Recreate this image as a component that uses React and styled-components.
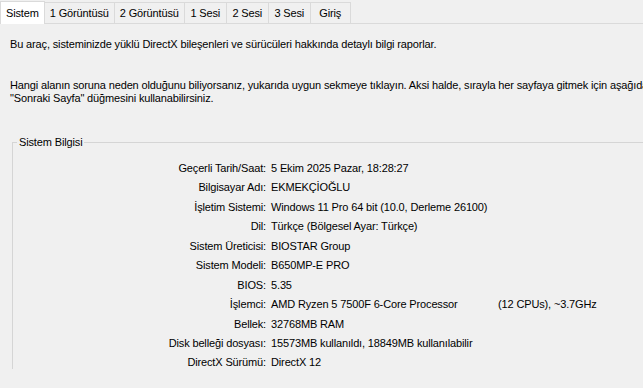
import React from "react";
import styled, { createGlobalStyle } from "styled-components";

const Global = createGlobalStyle`
  html, body { margin: 0; padding: 0; background: #f0f0f0; }
  body { font-family: "Liberation Sans", Arial, sans-serif; font-size: 11px; letter-spacing: -0.14px; color: #000; overflow: hidden; }
`;

const Window = styled.div`
  width: 643px;
  height: 388px;
  background: #f0f0f0;
  display: flex;
  flex-direction: column;
  overflow: hidden;
`;

const TabStrip = styled.div`
  display: flex;
  align-items: flex-end;
  height: 24px;
  background: #f0f0f0;
  border-bottom: 1px solid #dadada;
  box-sizing: border-box;
`;

const Tab = styled.div`
  height: ${(p) => (p.$active ? "23px" : "21px")};
  min-width: ${(p) => p.$min || 42}px;
  box-sizing: border-box;
  padding: 0 5px;
  display: flex;
  align-items: center;
  justify-content: center;
  background: ${(p) => (p.$active ? "#ffffff" : "#f0f0f0")};
  border: 1px solid #dadada;
  border-bottom: none;
  margin-left: -1px;
  margin-bottom: ${(p) => (p.$active ? "-1px" : "0")};
  white-space: nowrap;
  position: relative;
  z-index: ${(p) => (p.$active ? 1 : 0)};
  &:first-child { margin-left: 0; }
`;

const Page = styled.div`
  flex: 1;
  padding: 14px 0 0 10px;
  display: flex;
  flex-direction: column;
  white-space: nowrap;
`;

const Para = styled.p`
  margin: 0;
  line-height: 13px;
  margin-bottom: ${(p) => p.$mb || "0"};
`;

const Group = styled.fieldset`
  margin: 0 0 0 2px;
  padding: 13px 0 0 0;
  border: 1px solid #d5d5d5;
  border-right: none;
  border-bottom: none;
  min-width: 0;
`;

const Legend = styled.legend`
  padding: 0 2px;
  margin-left: 4px;
  line-height: 13px;
`;

const Rows = styled.div`
  display: grid;
  grid-template-columns: 253px 1fr;
  column-gap: 5px;
  row-gap: 6.45px;
`;

const Label = styled.div`
  text-align: right;
  line-height: 13px;
`;

const Value = styled.div`
  line-height: 13px;
  display: flex;
`;

const Cpu = styled.span`
  width: 227px;
`;

const tabs = [
  ["Sistem", 42],
  ["1 Görüntüsü", 69],
  ["2 Görüntüsü", 71],
  ["1 Sesi", 43],
  ["2 Sesi", 43],
  ["3 Sesi", 43],
  ["Giriş", 41],
];

const rows = [
  ["Geçerli Tarih/Saat:", "5 Ekim 2025 Pazar, 18:28:27"],
  ["Bilgisayar Adı:", "EKMEKÇİOĞLU"],
  ["İşletim Sistemi:", "Windows 11 Pro 64 bit (10.0, Derleme 26100)"],
  ["Dil:", "Türkçe (Bölgesel Ayar: Türkçe)"],
  ["Sistem Üreticisi:", "BIOSTAR Group"],
  ["Sistem Modeli:", "B650MP-E PRO"],
  ["BIOS:", "5.35"],
  ["İşlemci:", null],
  ["Bellek:", "32768MB RAM"],
  ["Disk belleği dosyası:", "15573MB kullanıldı, 18849MB kullanılabilir"],
  ["DirectX Sürümü:", "DirectX 12"],
];

export default function App() {
  return (
    <Window>
      <Global />
      <TabStrip>
        {tabs.map(([t, w], i) => (
          <Tab key={t} $active={i === 0} $min={w}>{t}</Tab>
        ))}
      </TabStrip>
      <Page>
        <Para $mb="28px">Bu araç, sisteminizde yüklü DirectX bileşenleri ve sürücüleri hakkında detaylı bilgi raporlar.</Para>
        <Para>Hangi alanın soruna neden olduğunu biliyorsanız, yukarıda uygun sekmeye tıklayın. Aksi halde, sırayla her sayfaya gitmek için aşağıdaki</Para>
        <Para $mb="31px">"Sonraki Sayfa" düğmesini kullanabilirsiniz.</Para>
        <Group>
          <Legend>Sistem Bilgisi</Legend>
          <Rows>
            {rows.map(([l, v]) => (
              <React.Fragment key={l}>
                <Label>{l}</Label>
                {v === null ? (
                  <Value>
                    <Cpu>AMD Ryzen 5 7500F 6-Core Processor</Cpu>
                    <span>(12 CPUs), ~3.7GHz</span>
                  </Value>
                ) : (
                  <Value>{v}</Value>
                )}
              </React.Fragment>
            ))}
          </Rows>
        </Group>
      </Page>
    </Window>
  );
}
